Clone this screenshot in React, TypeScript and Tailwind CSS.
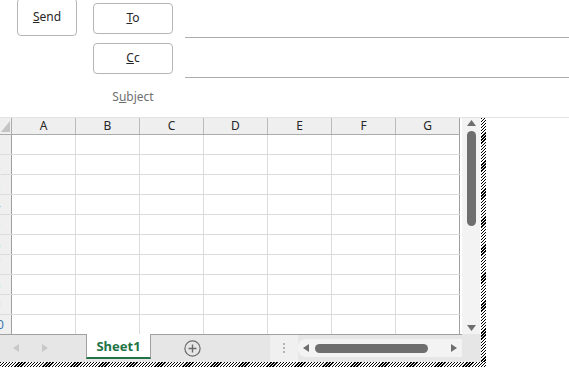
const cols = ['A', 'B', 'C', 'D', 'E', 'F', 'G'];
const rows = Array.from({ length: 10 }, (_, i) => i + 1);

const hatch = 'bg-[image:repeating-linear-gradient(135deg,#000_0_1px,#fff_1px_2.2px)]';

function Tri({ dir, color = '#6e6e6e' }: { dir: 'up' | 'down' | 'left' | 'right'; color?: string }) {
  const vertical = dir === 'up' || dir === 'down';
  const pts = {
    up: '0,6 4.5,0 9,6',
    down: '0,0 9,0 4.5,6',
    left: '6,0 6,8 0,4',
    right: '0,0 6,4 0,8',
  }[dir];
  return (
    <svg width={vertical ? 9 : 6} height={vertical ? 6 : 8} viewBox={vertical ? '0 0 9 6' : '0 0 6 8'}>
      <polygon points={pts} fill={color} />
    </svg>
  );
}

function PlusCircle() {
  return (
    <svg width="17" height="17" viewBox="0 0 17 17">
      <circle cx="8.5" cy="8.5" r="7.6" fill="none" stroke="#6a6a6a" strokeWidth="1.2" />
      <path d="M8.5 4.5v8M4.5 8.5h8" stroke="#6a6a6a" strokeWidth="1.4" />
    </svg>
  );
}

export default function App() {
  return (
    <div className="w-[569px] h-[387px] bg-white overflow-hidden font-['Noto_Sans',sans-serif] text-[#262626]">
      {/* mail header */}
      <header className="h-[118px] border-b border-[#e3e3e3] overflow-hidden">
        <div className="-mt-[2px] flex">
          <div className="pl-[17px]">
            <button className="w-[60px] h-[38px] rounded-[4px] border border-[#b5b5b5] text-[12px] flex items-center justify-center pb-[1px]">
              <span><u>S</u>end</span>
            </button>
          </div>
          <div className="ml-[16px] w-[80px] flex flex-col">
            <div className="h-[40px] flex items-center">
              <button className="w-[80px] h-[31px] rounded-[4px] border border-[#b5b5b5] text-[12px]">
                <u>T</u>o
              </button>
            </div>
            <div className="h-[40px] flex items-center">
              <button className="w-[80px] h-[31px] rounded-[4px] border border-[#b5b5b5] text-[12px]">
                <u>C</u>c
              </button>
            </div>
            <div className="h-[40px] flex items-center justify-center pb-[2px] text-[12px] text-[#6f6f6f]">
              <span>S<u>u</u>bject</span>
            </div>
          </div>
          <div className="ml-[12px] flex-1 flex flex-col">
            <div className="h-[40px] border-b border-[#adadad]" />
            <div className="h-[40px] border-b border-[#adadad]" />
          </div>
        </div>
      </header>

      {/* spreadsheet */}
      <div className="w-[486px]">
        <div className="flex">
          <div className="w-[481px] h-[244px] flex flex-col">
            <div className="flex h-[216px]">
              <div className="w-[460px] flex flex-col">
                <div className="flex h-[17px] bg-[#efefef] border-b border-[#ababab]">
                  <div className="w-[12px] border-r border-[#ababab] flex items-end pb-[2px] pl-[1px]">
                    <svg width="9" height="11" viewBox="0 0 9 11">
                      <polygon points="9,0 9,11 0,11" fill="#c4c4c4" />
                    </svg>
                  </div>
                  {cols.map((c, i) => (
                    <div
                      key={c}
                      className={
                        i < 6
                          ? 'w-[64px] border-r border-[#bcbcbc] flex items-center justify-center text-[12px] leading-none'
                          : 'w-[64px] border-r border-[#a0a0a0] flex items-center justify-center text-[12px] leading-none'
                      }
                    >
                      {c}
                    </div>
                  ))}
                </div>
                {rows.map((r, ri) => (
                  <div key={r} className={ri < 9 ? 'flex h-[20px] border-b border-[#dcdcdc]' : 'flex h-[19px]'}>
                    {/* row header is scrolled so only the tail of each number shows */}
                    <div className="w-[12px] bg-[#efefef] border-r border-[#a0a0a0] flex items-center overflow-hidden text-[12px] text-[#3b78b5]">
                      <span className="shrink-0 w-[20px] -ml-[13px] text-center">{r}</span>
                    </div>
                    {cols.map((c, i) => (
                      <div
                        key={c}
                        className={i < 6 ? 'w-[64px] border-r border-[#dcdcdc]' : 'w-[64px] border-r border-[#a0a0a0]'}
                      />
                    ))}
                  </div>
                ))}
              </div>
              {/* vertical scrollbar */}
              <div className="w-[21px] pl-[2px] pr-[1px]">
                <div className="h-full bg-[#f3f3f3] flex flex-col items-center pt-[2px] pb-[3px]">
                  <Tri dir="up" />
                  <div className="mt-[5px] w-[9px] h-[95px] rounded-full bg-[#6e6e6e]" />
                  <div className="flex-1" />
                  <Tri dir="down" />
                </div>
              </div>
            </div>

            {/* sheet tabs */}
            <div className="flex h-[28px] bg-[#e6e6e6]">
              <div className="w-[86px] border-t border-[#a0a0a0] flex items-center pl-[13px] gap-[23px] pb-[1px]">
                <Tri dir="left" color="#c8c8c8" />
                <Tri dir="right" color="#c8c8c8" />
              </div>
              <div className="w-[65px] h-[25px] bg-white border-x border-[#a0a0a0] border-b-2 border-b-[#217346] flex items-center justify-center pt-[2px] text-[13px] font-bold text-[#217346]">
                Sheet1
              </div>
              <div className="w-[119px] border-t border-[#a0a0a0] flex items-center pl-[33px] pb-[1px]">
                <PlusCircle />
              </div>
              <div className="w-[28px] bg-[#f0f0f0] border-t border-[#a0a0a0] flex flex-col items-center justify-center gap-[2px] pr-[1px] pb-[2px]">
                <div className="w-[2px] h-[2px] bg-[#b4b4b4]" />
                <div className="w-[2px] h-[2px] bg-[#b4b4b4]" />
                <div className="w-[2px] h-[2px] bg-[#b4b4b4]" />
              </div>
              <div className="w-[164px] border-t border-[#a0a0a0] pt-[4px]">
                <div className="h-[18px] bg-[#f3f3f3] rounded-l-[8px] flex items-center pl-[5px] pr-[5px]">
                  <Tri dir="left" />
                  <div className="ml-[6px] w-[113px] h-[9px] rounded-full bg-[#6e6e6e]" />
                  <div className="flex-1" />
                  <Tri dir="right" />
                </div>
              </div>
              <div className="flex-1" />
            </div>
          </div>
          <div className={`w-[5px] h-[244px] ${hatch}`} />
        </div>
        <div className={`h-[5px] w-[486px] ${hatch}`} />
      </div>
    </div>
  );
}
